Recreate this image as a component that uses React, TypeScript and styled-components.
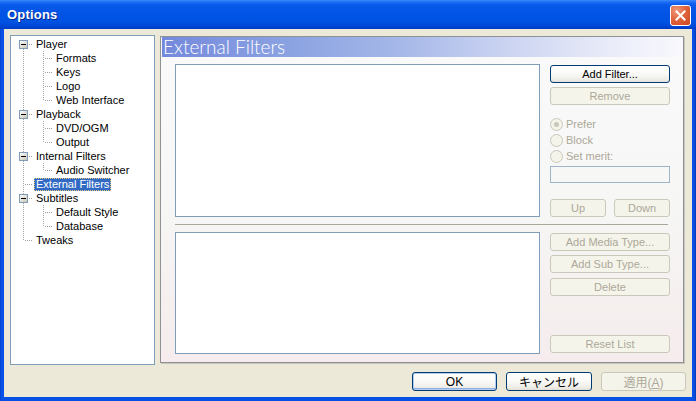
import React from 'react';
import styled, { createGlobalStyle, css } from 'styled-components';

const UI_FONT = `"Liberation Sans", "Noto Sans CJK JP", Arial, sans-serif`;

const GlobalStyle = createGlobalStyle`
  html, body { margin: 0; padding: 0; background: #ffffff; overflow: hidden; }
  #root { width: 696px; height: 401px; }
  * { box-sizing: border-box; }
`;

const Window = styled.div`
  width: 696px;
  height: 401px;
  display: flex;
  flex-direction: column;
  background: linear-gradient(90deg, #0032B8 0px, #0A55EC 1px, #0650E6 3px, #0650E6 calc(100% - 3px), #0A4BD8 calc(100% - 1px), #0030A8 100%);
  font-family: ${UI_FONT};
  font-size: 11px;
  color: #000;
`;

const TitleBar = styled.div`
  height: 29px;
  flex: none;
  display: flex;
  align-items: center;
  justify-content: space-between;
  padding: 0 5px 0 7px;
  background: linear-gradient(180deg, #3A8CF9 0px, #1E6EF5 2px, #0859EA 5px, #0254E6 14px, #0052E3 22px, #0047D6 26px, #003BC4 29px);
`;

const Title = styled.span`
  color: #fff;
  font-family: "Liberation Sans", Arial, sans-serif;
  font-weight: bold;
  font-size: 13px;
  text-shadow: 1px 1px 0 #0A2A8C;
  letter-spacing: 0.2px;
`;

const CloseButton = styled.div`
  width: 21px;
  height: 21px;
  margin-top: 2px;
  border: 1px solid #fff;
  border-radius: 3px;
  background: radial-gradient(circle at 30% 25%, #F09A7C 0%, #E0653F 45%, #C9461F 100%);
  display: flex;
  align-items: center;
  justify-content: center;
`;

const Client = styled.div`
  flex: 1;
  margin: 0 4px 4px;
  background: #ECE9D8;
  display: flex;
  flex-direction: column;
  padding: 6px 8px 0 6px;
`;

const MainRow = styled.div`
  display: flex;
  gap: 5px;
  height: 330px;
  align-items: flex-start;
`;

const TreePanel = styled.div`
  width: 145px;
  height: 330px;
  border: 1px solid #7F9DB9;
  background: #fff;
  padding: 1px 0 0 2px;
  display: flex;
  flex-direction: column;
`;

const TreeRow = styled.div`
  height: 14px;
  display: flex;
  align-items: center;
`;

const TreeLabel = styled.span<{ $selected?: boolean }>`
  height: 13px;
  line-height: 13px;
  margin-left: 1px;
  padding: 0 2px;
  white-space: nowrap;
  ${(p) =>
    p.$selected &&
    css`
      background: #316AC5;
      color: #fff;
      outline: 1px dotted #E8C878;
      outline-offset: -1px;
    `}
`;

const OptionsPanel = styled.div`
  margin-top: 1px;
  width: 524px;
  height: 327px;
  border: 1px solid #8F9294;
  box-shadow: 1px 1px 0 #C8C6BA;
  background: linear-gradient(180deg, #FAFAFB 0%, #F6F6F5 55%, #F5F0EF 80%, #F6ECED 100%);
  display: flex;
  flex-direction: column;
`;

const PanelHeader = styled.div`
  height: 20px;
  margin-left: 1px;
  padding-left: 1px;
  background: linear-gradient(90deg, #7489DC 0%, #8CA3E2 25%, #A4B7E8 45%, #C4CEF0 62%, #DDE2F5 78%, #EEF0FA 90%, #F8F8FD 100%);
  color: #fff;
  font-family: "Lato", "Liberation Sans", sans-serif;
  font-weight: 300;
  font-size: 19px;
  line-height: 20px;
  white-space: nowrap;
`;

const PanelBody = styled.div`
  padding: 7px 13px 0 14px;
  display: flex;
  flex-direction: column;
`;

const Section = styled.div<{ $h: number }>`
  display: flex;
  gap: 10px;
  height: ${(p) => p.$h}px;
`;

const ListBox = styled.div`
  width: 365px;
  height: 100%;
  border: 1px solid #7F9DB9;
  background: #fff;
`;

const Column = styled.div`
  width: 120px;
  display: flex;
  flex-direction: column;
  padding: 1px 0;
`;

const Separator = styled.div`
  height: 1px;
  margin: 7px 2px 7px 0;
  background: #ACA899;
`;

const Button = styled.button<{ $w?: number; $mt?: number; $default?: boolean }>`
  width: ${(p) => (p.$w ? `${p.$w}px` : '100%')};
  height: 18px;
  flex: none;
  margin-top: ${(p) => p.$mt ?? 0}px;
  padding: 0;
  font-family: ${UI_FONT};
  font-size: 11px;
  color: #000;
  border: 1px solid #003C74;
  border-radius: 3px;
  background: linear-gradient(180deg, #FFFFFF 0%, #FAFAF8 45%, #F0EFEA 80%, #E3E0D6 100%);
  ${(p) =>
    p.$default &&
    css`
      box-shadow: inset 0 0 0 1px #B3CCF0, inset 0 -1px 0 1px #8DAEE6;
    `}
  &:disabled {
    color: #ACA899;
    border-color: #CAC8BB;
    background: #F5F4EA;
  }
`;

const RadioGroup = styled.div`
  margin-top: 11px;
  display: flex;
  flex-direction: column;
`;

const RadioRow = styled.div`
  height: 16px;
  display: flex;
  align-items: center;
  gap: 3px;
  color: #ACA899;
`;

const RadioCircle = styled.span<{ $checked?: boolean }>`
  width: 13px;
  height: 13px;
  border-radius: 50%;
  border: 1px solid #CAC8BB;
  background: #F5F4EA;
  display: flex;
  align-items: center;
  justify-content: center;
  &::after {
    content: '';
    width: 5px;
    height: 5px;
    border-radius: 50%;
    background: ${(p) => (p.$checked ? '#CAC8BB' : 'transparent')};
  }
`;

const TextBox = styled.input`
  width: 120px;
  height: 18px;
  margin-top: 2px;
  border: 1px solid #9FB4C9;
  background: transparent;
  padding: 0;
`;

const ButtonPair = styled.div`
  display: flex;
  justify-content: space-between;
  margin-top: 16px;
`;

const Spacer = styled.div`
  flex: 1;
`;

const Footer = styled.div`
  display: flex;
  justify-content: flex-end;
  gap: 9px;
  margin: 7px -2px 0 0;
`;

const FooterButton = styled(Button)`
  height: 19px;
  font-size: 12px;
`;

type Conn = 'boxFirst' | 'boxMid' | 'pipe' | 'tee' | 'elbow' | 'none';

const DOT = '#A0A0A0';

const Connector: React.FC<{ type: Conn }> = ({ type }) => {
  const v = (y1: number, y2: number) => (
    <line x1={10.5} y1={y1} x2={10.5} y2={y2} stroke={DOT} strokeDasharray="1 1" />
  );
  const h = (x1: number) => (
    <line x1={x1} y1={7.5} x2={20} y2={7.5} stroke={DOT} strokeDasharray="1 1" />
  );
  return (
    <svg width="20" height="14" viewBox="0 0 20 14" style={{ flex: 'none', display: 'block' }}>
      {type === 'pipe' && v(0, 14)}
      {type === 'tee' && (
        <>
          {v(0, 14)}
          {h(12)}
        </>
      )}
      {type === 'elbow' && (
        <>
          {v(0, 8)}
          {h(12)}
        </>
      )}
      {(type === 'boxFirst' || type === 'boxMid') && (
        <>
          {type === 'boxMid' && v(0, 3)}
          {v(12, 14)}
          {h(16)}
          <defs>
            <linearGradient id="bx" x1="0" y1="0" x2="1" y2="1">
              <stop offset="0" stopColor="#FFFFFF" />
              <stop offset="1" stopColor="#C6C2B2" />
            </linearGradient>
          </defs>
          <rect x={6.5} y={3.5} width={8} height={8} fill="url(#bx)" stroke="#7F9DB9" />
          <line x1={8} y1={7.5} x2={13} y2={7.5} stroke="#000" />
        </>
      )}
    </svg>
  );
};

type Node = { label: string; cells: Conn[]; selected?: boolean };

const tree: Node[] = [
  { label: 'Player', cells: ['boxFirst'] },
  { label: 'Formats', cells: ['pipe', 'tee'] },
  { label: 'Keys', cells: ['pipe', 'tee'] },
  { label: 'Logo', cells: ['pipe', 'tee'] },
  { label: 'Web Interface', cells: ['pipe', 'elbow'] },
  { label: 'Playback', cells: ['boxMid'] },
  { label: 'DVD/OGM', cells: ['pipe', 'tee'] },
  { label: 'Output', cells: ['pipe', 'elbow'] },
  { label: 'Internal Filters', cells: ['boxMid'] },
  { label: 'Audio Switcher', cells: ['pipe', 'elbow'] },
  { label: 'External Filters', cells: ['tee'], selected: true },
  { label: 'Subtitles', cells: ['boxMid'] },
  { label: 'Default Style', cells: ['pipe', 'tee'] },
  { label: 'Database', cells: ['pipe', 'elbow'] },
  { label: 'Tweaks', cells: ['elbow'] },
];

export default function App() {
  return (
    <>
      <GlobalStyle />
      <Window>
        <TitleBar>
          <Title>Options</Title>
          <CloseButton>
            <svg width="11" height="11" viewBox="0 0 11 11">
              <path d="M1.5 1.5 L9.5 9.5 M9.5 1.5 L1.5 9.5" stroke="#fff" strokeWidth="2" strokeLinecap="square" />
            </svg>
          </CloseButton>
        </TitleBar>
        <Client>
          <MainRow>
            <TreePanel>
              {tree.map((n) => (
                <TreeRow key={n.label}>
                  {n.cells.map((c, i) => (
                    <Connector key={i} type={c} />
                  ))}
                  <TreeLabel $selected={n.selected}>{n.label}</TreeLabel>
                </TreeRow>
              ))}
            </TreePanel>
            <OptionsPanel>
              <PanelHeader>External Filters</PanelHeader>
              <PanelBody>
                <Section $h={153}>
                  <ListBox />
                  <Column>
                    <Button>Add Filter...</Button>
                    <Button $mt={4} disabled>
                      Remove
                    </Button>
                    <RadioGroup>
                      <RadioRow>
                        <RadioCircle $checked />
                        Prefer
                      </RadioRow>
                      <RadioRow>
                        <RadioCircle />
                        Block
                      </RadioRow>
                      <RadioRow>
                        <RadioCircle />
                        Set merit:
                      </RadioRow>
                    </RadioGroup>
                    <TextBox disabled />
                    <ButtonPair>
                      <Button $w={56} disabled>
                        Up
                      </Button>
                      <Button $w={56} disabled>
                        Down
                      </Button>
                    </ButtonPair>
                  </Column>
                </Section>
                <Separator />
                <Section $h={122}>
                  <ListBox />
                  <Column>
                    <Button disabled>Add Media Type...</Button>
                    <Button $mt={4} disabled>
                      Add Sub Type...
                    </Button>
                    <Button $mt={5} disabled>
                      Delete
                    </Button>
                    <Spacer />
                    <Button disabled>Reset List</Button>
                  </Column>
                </Section>
              </PanelBody>
            </OptionsPanel>
          </MainRow>
          <Footer>
            <FooterButton $w={85} $default>
              OK
            </FooterButton>
            <FooterButton $w={86}>キャンセル</FooterButton>
            <FooterButton $w={85} disabled>
              適用(<u>A</u>)
            </FooterButton>
          </Footer>
        </Client>
      </Window>
    </>
  );
}
